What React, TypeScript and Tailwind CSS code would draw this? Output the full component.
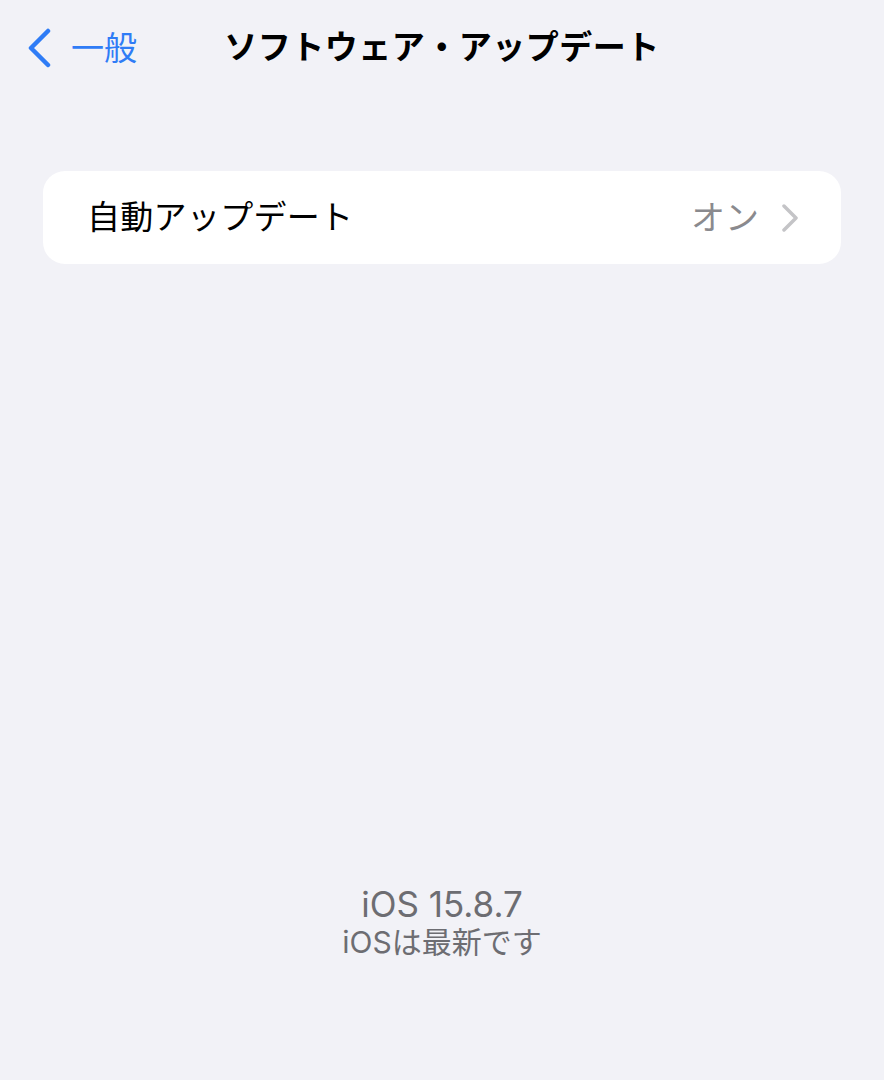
const font = { fontFamily: 'Inter, "Noto Sans CJK JP", sans-serif' }

function BackChevron() {
  return (
    <svg width="26" height="40" viewBox="0 0 26 40" fill="none">
      <polyline
        points="21,3 4,20 21,37"
        stroke="#2f7cf6"
        strokeWidth="4.5"
        strokeLinecap="round"
        strokeLinejoin="round"
      />
    </svg>
  )
}

function RowChevron() {
  return (
    <svg width="18" height="28" viewBox="0 0 18 28" fill="none">
      <polyline
        points="3,2 15,14 3,26"
        stroke="#c4c4c7"
        strokeWidth="3.5"
        strokeLinecap="round"
        strokeLinejoin="round"
      />
    </svg>
  )
}

export default function App() {
  return (
    <div style={font} className="flex h-[1080px] w-full flex-col bg-[#f2f2f7]">
      <header className="grid h-[96px] grid-cols-[1fr_auto_1fr] items-center">
        <div className="flex items-center gap-[18px] pl-[27px]">
          <BackChevron />
          <span className="text-[33px] leading-none text-[#2f7cf6]">一般</span>
        </div>
        <h1 className="text-[33px] font-bold tracking-[0.5px] text-black">ソフトウェア・アップデート</h1>
        <div />
      </header>

      <section className="mx-[43px] mt-[75px]">
        <div className="flex h-[93px] items-center justify-between rounded-[22px] bg-white pl-[44px] pr-[42px]">
          <span className="text-[33px] tracking-[0.3px] text-black">自動アップデート</span>
          <div className="flex items-center gap-[22px]">
            <span className="text-[34px] text-[#8a8a8e]">オン</span>
            <RowChevron />
          </div>
        </div>
      </section>

      <div className="flex-1" />

      <footer className="flex flex-col items-center pb-[121px] text-[#6d6d72]">
        <p className="text-[35px] leading-[42px]">iOS 15.8.7</p>
        <p className="text-[30px] leading-[34px]">iOSは最新です</p>
      </footer>
    </div>
  )
}
